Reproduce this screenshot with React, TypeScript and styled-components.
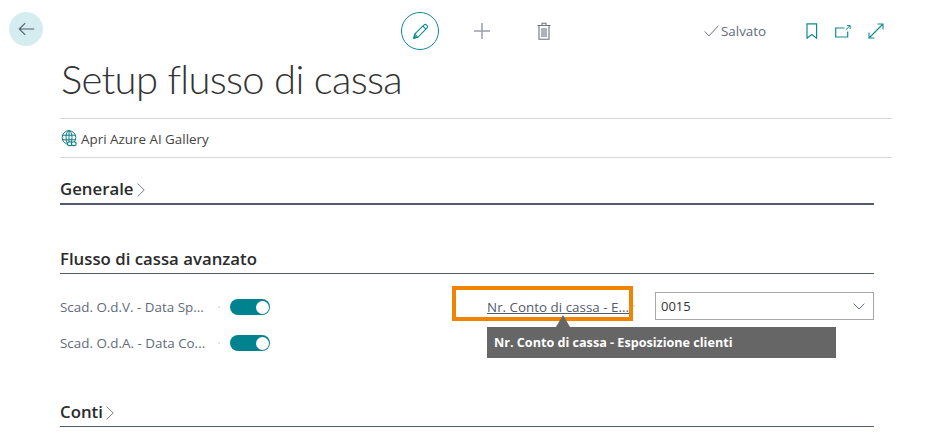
import { createGlobalStyle, styled } from 'styled-components';

const GlobalStyle = createGlobalStyle`
  html, body {
    margin: 0;
    padding: 0;
    background: #fff;
    overflow: hidden;
  }
  body {
    font-family: 'Open Sans', 'Noto Sans', 'Liberation Sans', sans-serif;
    color: #212121;
  }
`;

const App = () => {
  return (
    <Page>
      <GlobalStyle />
      <BackColumn>
        <BackButton>
          <svg width="17" height="14" viewBox="0 0 20 16" fill="none" stroke="#505c6d" strokeWidth="1.3">
            <path d="M19 8H1.5M8.5 1L1.5 8l7 7" />
          </svg>
        </BackButton>
      </BackColumn>
      <Main>
        <TopBar>
          <CenterActions>
            <EditButton>
              <svg width="17" height="17" viewBox="0 0 20 20" fill="none" stroke="#0f8a94" strokeWidth="1.3">
                <path d="M2 18l1.2-5L14.2 2.2a1.8 1.8 0 0 1 2.6 0l1 1a1.8 1.8 0 0 1 0 2.6L6.9 16.8z" />
                <path d="M3.2 13l3.7 3.8M12.8 3.6l3.6 3.6" />
                <path d="M2 18l2.8-.9-1.9-1.9z" fill="#0f8a94" />
              </svg>
            </EditButton>
            <ToolIcon>
              <svg width="18" height="18" viewBox="0 0 18 18" stroke="#9a9ea6" strokeWidth="1.5">
                <path d="M9 1v16M1 9h16" />
              </svg>
            </ToolIcon>
            <ToolIcon>
              <svg width="14" height="18" viewBox="0 0 14 18" fill="none" stroke="#6b7280" strokeWidth="1.1">
                <path d="M.5 3.5h13M5 3.5V1.2h4v2.3M2 3.5v13.8h10V3.5" />
                <path d="M5 6v9M7 6v9M9 6v9" />
              </svg>
            </ToolIcon>
          </CenterActions>
          <RightActions>
            <SavedStatus>
              <svg width="15" height="12" viewBox="0 0 15 12" fill="none" stroke="#6b7280" strokeWidth="1">
                <path d="M.7 6.5l4.3 4.4L14.4.7" />
              </svg>
              Salvato
            </SavedStatus>
            <PageIcons>
              <svg width="12" height="16" viewBox="0 0 12 16" fill="none" stroke="#0f8a94" strokeWidth="1.2">
                <path d="M1 .8h9.6v14.4L5.8 11.6 1 15.2z" />
              </svg>
              <svg width="16" height="13" viewBox="0 0 16 13" fill="none" stroke="#0f8a94" strokeWidth="1.2">
                <path d="M9.5 3H.7v9h12V6.5" />
                <path d="M10.8 4.8L15 .8M11.8.6h3.4V4" strokeWidth="1" />
              </svg>
              <svg width="16" height="16" viewBox="0 0 16 16" fill="none" stroke="#0f8a94" strokeWidth="1.1">
                <path d="M1 15L15 1M9.5 1H15v5.5M1 9.5V15h5.5" />
              </svg>
            </PageIcons>
          </RightActions>
        </TopBar>

        <Title>Setup flusso di cassa</Title>

        <ActionBar>
          <ActionLink>
            <svg width="16" height="17" viewBox="0 0 16 17" fill="none" stroke="#0f7c86" strokeWidth="1">
              <circle cx="8" cy="7.5" r="6.8" />
              <ellipse cx="8" cy="7.5" rx="3" ry="6.8" />
              <path d="M1.5 5.2h13M1.5 9.8h13M8 .7v13.6" />
              <rect x="6.4" y="12" width="4.8" height="3.6" rx="1.8" fill="#fff" strokeWidth="1.2" />
              <rect x="10.4" y="12" width="4.8" height="3.6" rx="1.8" fill="#fff" strokeWidth="1.2" />
            </svg>
            Apri Azure AI Gallery
          </ActionLink>
        </ActionBar>

        <Section>
          <SectionHeader $thick>
            Generale
            <Chevron />
          </SectionHeader>
        </Section>

        <Section $gap={39}>
          <SectionHeader>Flusso di cassa avanzato</SectionHeader>
          <FieldGrid>
            <FieldColumn>
              <FieldRow>
                <FieldLabel>Scad. O.d.V. - Data Sp...</FieldLabel>
                <Dots />
                <Toggle />
              </FieldRow>
              <FieldRow>
                <FieldLabel>Scad. O.d.A. - Data Co...</FieldLabel>
                <Dots />
                <Toggle />
              </FieldRow>
            </FieldColumn>
            <AccountField>
              <HighlightBox>
                <LinkLabel>Nr. Conto di cassa - E...</LinkLabel>
                <Tooltip>Nr. Conto di cassa - Esposizione clienti</Tooltip>
              </HighlightBox>
              <Dots />
              <SelectBox>
                0015
                <svg width="12" height="7" viewBox="0 0 12 7" fill="none" stroke="#6b7280" strokeWidth="1">
                  <path d="M.6.6L6 6l5.4-5.4" />
                </svg>
              </SelectBox>
            </AccountField>
          </FieldGrid>
        </Section>

        <Section $gap={40}>
          <SectionHeader>
            Conti
            <Chevron />
          </SectionHeader>
        </Section>
      </Main>
    </Page>
  );
};

const Chevron = () => (
  <ChevronIcon width="8" height="14" viewBox="0 0 8 14" fill="none" stroke="#6b7280" strokeWidth="0.9">
    <path d="M.6.6L7.2 7 .6 13.4" />
  </ChevronIcon>
);

export default App;

const Page = styled.div`
  width: 944px;
  height: 447px;
  display: flex;
  overflow: hidden;
`;

const BackColumn = styled.div`
  width: 60px;
  flex-shrink: 0;
  padding: 12px 0 0 9px;
  box-sizing: border-box;
`;

const BackButton = styled.div`
  width: 34px;
  height: 34px;
  border-radius: 50%;
  background: #d5edf1;
  display: flex;
  align-items: center;
  justify-content: center;
`;

const Main = styled.div`
  width: 832px;
  display: flex;
  flex-direction: column;
`;

const TopBar = styled.div`
  height: 38px;
  margin-top: 12px;
  display: flex;
  align-items: center;
`;

const CenterActions = styled.div`
  margin-left: 341px;
  display: flex;
  align-items: center;
  gap: 24px;
`;

const EditButton = styled.div`
  width: 38px;
  height: 38px;
  box-sizing: border-box;
  border: 1px solid #0f8a94;
  border-radius: 50%;
  display: flex;
  align-items: center;
  justify-content: center;
`;

const ToolIcon = styled.div`
  width: 38px;
  display: flex;
  justify-content: center;
`;

const RightActions = styled.div`
  margin-left: 141px;
  display: flex;
  align-items: center;
`;

const SavedStatus = styled.div`
  width: 102px;
  display: flex;
  align-items: center;
  gap: 2px;
  font-size: 13.4px;
  color: #616b7a;
`;

const PageIcons = styled.div`
  display: flex;
  align-items: center;
  gap: 17px;
`;

const Title = styled.h1`
  margin: 3px 0 0;
  padding-left: 1px;
  height: 65px;
  font-family: Lato, 'Open Sans', sans-serif;
  font-size: 40px;
  letter-spacing: -0.7px;
  line-height: 52px;
  font-weight: 300;
  color: #333;
  border-bottom: 1px solid #d5d5d5;
  box-sizing: content-box;
`;

const ActionBar = styled.div`
  height: 38px;
  display: flex;
  align-items: center;
  border-bottom: 1px solid #d5d5d5;
`;

const ActionLink = styled.div`
  display: flex;
  align-items: center;
  gap: 4px;
  padding: 1px 0 0 1px;
  font-size: 13.4px;
  color: #444;
`;

const Section = styled.section<{ $gap?: number }>`
  width: 814px;
  margin-top: ${(p) => p.$gap ?? 16}px;
`;

const SectionHeader = styled.h2<{ $thick?: boolean }>`
  margin: 0;
  height: 29px;
  display: flex;
  align-items: center;
  gap: 3px;
  font-size: 16.8px;
  font-weight: 550;
  letter-spacing: 0;
  color: #2b2b2b;
  box-sizing: content-box;
  border-bottom: ${(p) => (p.$thick ? '2px solid #505c6d' : '1px solid #505c6d')};
`;

const ChevronIcon = styled.svg`
  margin-top: 2px;
`;

const FieldGrid = styled.div`
  display: flex;
  margin-top: 19px;
`;

const FieldColumn = styled.div`
  width: 393px;
  display: flex;
  flex-direction: column;
  gap: 8px;
`;

const FieldRow = styled.div`
  height: 28px;
  display: flex;
  align-items: center;
`;

const FieldLabel = styled.div`
  width: 158px;
  font-size: 13.4px;
  color: #616b7a;
  white-space: nowrap;
`;

const Dots = styled.div`
  width: 2px;
  height: 2px;
  border-radius: 50%;
  background: #d8d8d8;
  flex-shrink: 0;
`;

const Toggle = styled.div`
  position: relative;
  margin-left: 10px;
  width: 40px;
  height: 16px;
  border-radius: 8px;
  background: #00838f;

  &::after {
    content: '';
    position: absolute;
    right: 1px;
    top: 1.5px;
    width: 13px;
    height: 13px;
    border-radius: 50%;
    background: #fff;
  }
`;

const AccountField = styled.div`
  display: flex;
  align-items: center;
  height: 28px;
  margin-top: -1px;
`;

const HighlightBox = styled.div`
  position: relative;
  width: 181px;
  height: 35px;
  margin-bottom: 5px;
  box-sizing: border-box;
  border: 4px solid #f08300;
  display: flex;
  align-items: center;
  justify-content: flex-end;
  padding: 6px 0 0 0;
`;

const LinkLabel = styled.span`
  font-size: 13.4px;
  color: #505c6d;
  text-decoration: underline;
  white-space: nowrap;
`;

const Tooltip = styled.div`
  position: absolute;
  left: 31px;
  top: 37px;
  width: 349px;
  height: 31px;
  padding-left: 7px;
  box-sizing: border-box;
  background: #666;
  color: #fff;
  font-size: 12.6px;
  font-weight: 700;
  line-height: 31px;
  white-space: nowrap;

  &::before {
    content: '';
    position: absolute;
    left: 69px;
    top: -12px;
    border-left: 7.5px solid transparent;
    border-right: 7.5px solid transparent;
    border-bottom: 12px solid #666;
  }
`;

const SelectBox = styled.div`
  margin-left: 20px;
  width: 219px;
  height: 28px;
  box-sizing: border-box;
  border: 1px solid #a8a8a8;
  display: flex;
  align-items: center;
  justify-content: space-between;
  padding: 0 8px 0 5px;
  font-size: 13px;
  color: #333;
`;
